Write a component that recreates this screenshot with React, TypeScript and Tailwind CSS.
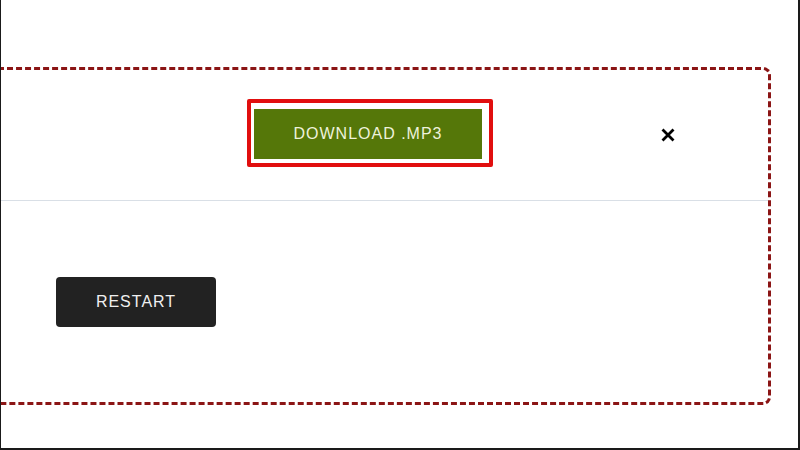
export default function App() {
  return (
    <div className="relative h-[450px] w-[800px] overflow-hidden border-b-2 border-l border-r-2 border-[#1a1a1a] bg-white font-['Liberation_Sans',Arial,sans-serif]">
      {/* Dashed panel, cut off at the left edge */}
      <div className="ml-[-20px] mt-[67px] flex h-[338px] w-[790px] flex-col rounded-[8px] border-[3px] border-dashed border-[#8b1515]">
        {/* Header */}
        <div className="flex h-[130px] items-center justify-end gap-[168px] pr-[93px]">
          <div className="mb-[4px] rounded-[2px] border-4 border-[#e10e0e] pb-[4px] pl-[3px] pr-[7px] pt-[6px]">
            <button className="flex h-[50px] w-[228px] items-center justify-center bg-[#557709] text-[16px] tracking-[1px] text-[#eef2dc]">
              DOWNLOAD .MP3
            </button>
          </div>
          <svg
            aria-hidden="true"
            className="h-[14px] w-[14px]"
            viewBox="0 0 14 14"
            fill="none"
            stroke="#000"
            strokeWidth={2.8}
          >
            <path d="M1.5 1.5l11 11M12.5 1.5l-11 11" />
          </svg>
        </div>
        <div className="h-px bg-[#d9dfe6]" />
        {/* Body */}
        <div className="pl-[72px] pt-[76px]">
          <button className="flex h-[50px] w-[160px] items-center justify-center rounded-[4px] bg-[#222222] text-[16px] tracking-[1px] text-[#f0f0f0]">
            RESTART
          </button>
        </div>
      </div>
    </div>
  );
}
